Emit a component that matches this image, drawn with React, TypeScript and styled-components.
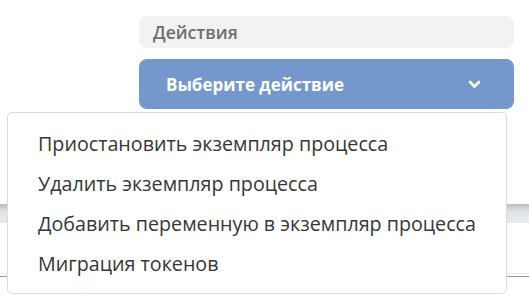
import styled, { createGlobalStyle } from 'styled-components'

const GlobalStyle = createGlobalStyle`
  html, body {
    margin: 0;
    padding: 0;
    background: #fff;
  }
  body {
    font-family: "Open Sans", "Noto Sans", sans-serif;
  }
`

const Page = styled.div`
  position: relative;
  width: 529px;
  height: 296px;
  overflow: hidden;
`

const Actions = styled.div`
  display: flex;
  flex-direction: column;
  gap: 11px;
  padding: 16px 15px 0 139px;
`

const Label = styled.div`
  height: 32px;
  display: flex;
  align-items: center;
  padding-left: 14px;
  border-radius: 8px;
  background: #f2f2f2;
  color: #6e6e6e;
  font-size: 17.5px;
  font-weight: 600;
`

const SelectButton = styled.div`
  height: 50px;
  display: flex;
  align-items: center;
  justify-content: space-between;
  padding: 0 33px 0 27px;
  border-radius: 8px;
  background: #7498cc;
  color: #fff;
  font-size: 17px;
  font-weight: 700;
`

const Table = styled.div`
  margin-top: 95px;
  display: flex;
  flex-direction: column;
`

const HeaderBand = styled.div`
  height: 19px;
  background: linear-gradient(#bdbdbd, #dfe6e9 40%, #e6ecee);
`

const RowLine = styled.div<{ $gap: number; $color: string }>`
  margin-top: ${p => p.$gap}px;
  height: 1px;
  background: ${p => p.$color};
`

const Menu = styled.ul`
  position: absolute;
  left: 7px;
  top: 112px;
  width: 500px;
  box-sizing: border-box;
  margin: 0;
  padding: 10px 0;
  list-style: none;
  background: #fff;
  border: 1px solid #dcdcdc;
  border-radius: 5px;
`

const MenuItem = styled.li`
  height: 40px;
  display: flex;
  align-items: center;
  padding-left: 30px;
  color: #363636;
  font-size: 19.7px;
`

const Chevron = () => (
  <svg width="13" height="9" viewBox="0 0 13 9" fill="none">
    <path d="M2 2l4.5 4.5L11 2" stroke="#fff" strokeWidth="2.6" strokeLinecap="round" strokeLinejoin="round" />
  </svg>
)

const items = [
  'Приостановить экземпляр процесса',
  'Удалить экземпляр процесса',
  'Добавить переменную в экземпляр процесса',
  'Миграция токенов',
]

export default function App() {
  return (
    <Page>
      <GlobalStyle />
      <Actions>
        <Label>Действия</Label>
        <SelectButton>
          <span>Выберите действие</span>
          <Chevron />
        </SelectButton>
      </Actions>
      <Table>
        <HeaderBand />
        <RowLine $gap={50} $color="#e3e9ec" />
        <RowLine $gap={2} $color="#9a9a9a" />
      </Table>
      <Menu>
        {items.map(t => (
          <MenuItem key={t}>{t}</MenuItem>
        ))}
      </Menu>
    </Page>
  )
}
